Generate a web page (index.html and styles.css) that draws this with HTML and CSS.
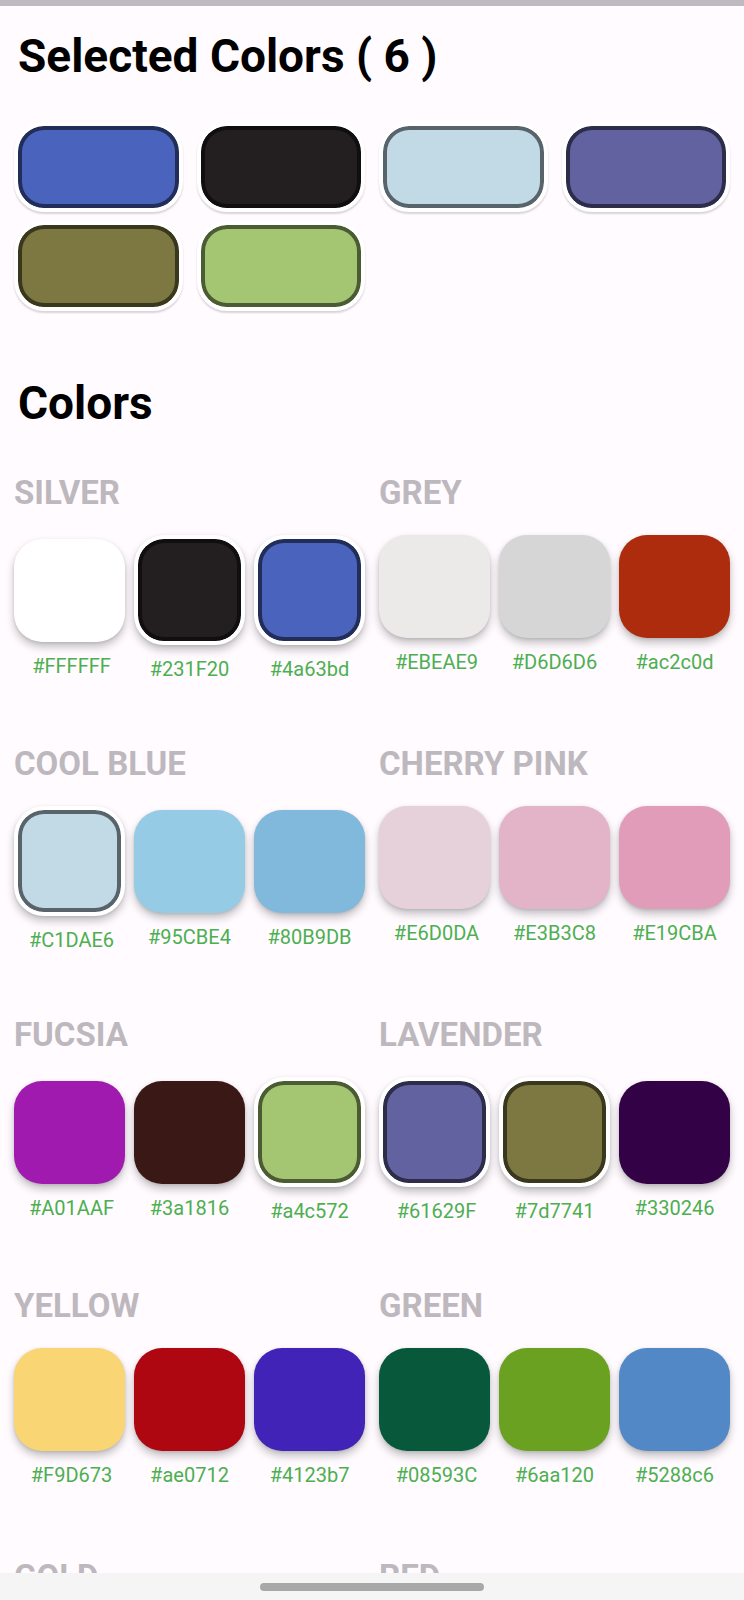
FILE: index.html
```
<!DOCTYPE html>
<html lang="en">
<head>
<meta charset="utf-8">
<meta name="viewport" content="width=device-width, initial-scale=1">
<title>Colors</title>
<link rel="stylesheet" href="styles.css">
</head>
<body>
<div class="app">
  <div class="status-bar"></div>
  <main class="content">
    <h1 class="title">Selected Colors ( 6 )</h1>
    <div class="selected-grid">
      <button class="chip" type="button" aria-label="#4a63bd" style="--c:#4a63bd"></button>
      <button class="chip" type="button" aria-label="#231F20" style="--c:#231F20"></button>
      <button class="chip" type="button" aria-label="#C1DAE6" style="--c:#C1DAE6"></button>
      <button class="chip" type="button" aria-label="#61629F" style="--c:#61629F"></button>
      <button class="chip" type="button" aria-label="#7d7741" style="--c:#7d7741"></button>
      <button class="chip" type="button" aria-label="#a4c572" style="--c:#a4c572"></button>
    </div>
    <h2 class="title title-colors">Colors</h2>
    <div class="groups">
      <section class="group">
        <h3 class="group-name">SILVER</h3>
        <div class="swatches">
          <label class="item"><button class="swatch" type="button" style="--c:#FFFFFF"></button><span class="code">#FFFFFF</span></label>
          <label class="item"><button class="swatch picked" type="button" style="--c:#231F20"></button><span class="code">#231F20</span></label>
          <label class="item"><button class="swatch picked" type="button" style="--c:#4a63bd"></button><span class="code">#4a63bd</span></label>
        </div>
      </section>
      <section class="group">
        <h3 class="group-name">GREY</h3>
        <div class="swatches">
          <label class="item"><button class="swatch" type="button" style="--c:#EBEAE9"></button><span class="code">#EBEAE9</span></label>
          <label class="item"><button class="swatch" type="button" style="--c:#D6D6D6"></button><span class="code">#D6D6D6</span></label>
          <label class="item"><button class="swatch" type="button" style="--c:#ac2c0d"></button><span class="code">#ac2c0d</span></label>
        </div>
      </section>
      <section class="group">
        <h3 class="group-name">COOL BLUE</h3>
        <div class="swatches">
          <label class="item"><button class="swatch picked" type="button" style="--c:#C1DAE6"></button><span class="code">#C1DAE6</span></label>
          <label class="item"><button class="swatch" type="button" style="--c:#95CBE4"></button><span class="code">#95CBE4</span></label>
          <label class="item"><button class="swatch" type="button" style="--c:#80B9DB"></button><span class="code">#80B9DB</span></label>
        </div>
      </section>
      <section class="group">
        <h3 class="group-name">CHERRY PINK</h3>
        <div class="swatches">
          <label class="item"><button class="swatch" type="button" style="--c:#E6D0DA"></button><span class="code">#E6D0DA</span></label>
          <label class="item"><button class="swatch" type="button" style="--c:#E3B3C8"></button><span class="code">#E3B3C8</span></label>
          <label class="item"><button class="swatch" type="button" style="--c:#E19CBA"></button><span class="code">#E19CBA</span></label>
        </div>
      </section>
      <section class="group">
        <h3 class="group-name">FUCSIA</h3>
        <div class="swatches">
          <label class="item"><button class="swatch" type="button" style="--c:#A01AAF"></button><span class="code">#A01AAF</span></label>
          <label class="item"><button class="swatch" type="button" style="--c:#3a1816"></button><span class="code">#3a1816</span></label>
          <label class="item"><button class="swatch picked" type="button" style="--c:#a4c572"></button><span class="code">#a4c572</span></label>
        </div>
      </section>
      <section class="group">
        <h3 class="group-name">LAVENDER</h3>
        <div class="swatches">
          <label class="item"><button class="swatch picked" type="button" style="--c:#61629F"></button><span class="code">#61629F</span></label>
          <label class="item"><button class="swatch picked" type="button" style="--c:#7d7741"></button><span class="code">#7d7741</span></label>
          <label class="item"><button class="swatch" type="button" style="--c:#330246"></button><span class="code">#330246</span></label>
        </div>
      </section>
      <section class="group">
        <h3 class="group-name">YELLOW</h3>
        <div class="swatches">
          <label class="item"><button class="swatch" type="button" style="--c:#F9D673"></button><span class="code">#F9D673</span></label>
          <label class="item"><button class="swatch" type="button" style="--c:#ae0712"></button><span class="code">#ae0712</span></label>
          <label class="item"><button class="swatch" type="button" style="--c:#4123b7"></button><span class="code">#4123b7</span></label>
        </div>
      </section>
      <section class="group">
        <h3 class="group-name">GREEN</h3>
        <div class="swatches">
          <label class="item"><button class="swatch" type="button" style="--c:#08593C"></button><span class="code">#08593C</span></label>
          <label class="item"><button class="swatch" type="button" style="--c:#6aa120"></button><span class="code">#6aa120</span></label>
          <label class="item"><button class="swatch" type="button" style="--c:#5288c6"></button><span class="code">#5288c6</span></label>
        </div>
      </section>
      <section class="group">
        <h3 class="group-name">GOLD</h3>
      </section>
      <section class="group">
        <h3 class="group-name">RED</h3>
      </section>
    </div>
  </main>
  <div class="nav-bar"><div class="nav-handle"></div></div>
</div>
</body>
</html>
```
FILE: styles.css
```
* {
  box-sizing: border-box;
}

body {
  margin: 0;
  background: #fffbff;
  font-family: Roboto, "Noto Sans", sans-serif;
}

.app {
  display: flex;
  flex-direction: column;
  height: 100vh;
}

.status-bar {
  flex: none;
  height: 6px;
  background: #bfbabf;
}

.content {
  flex: 1;
  min-height: 0;
  overflow: hidden;
  padding: 24px 14px 0;
}

.title {
  margin: 0;
  padding-left: 4px;
  font-size: 46px;
  line-height: 52px;
  font-weight: 700;
  color: #000;
}

.selected-grid {
  display: grid;
  grid-template-columns: repeat(4, 1fr);
  gap: 9px 14px;
  margin-top: 40px;
}

.chip,
.swatch {
  display: block;
  width: 100%;
  padding: 0;
  border: 0;
  border-radius: 28px;
  background: var(--c);
}

.chip,
.swatch.picked {
  border: 4px solid #fff;
  border-radius: 30px;
  box-shadow: inset 0 0 0 4px color-mix(in srgb, var(--c) 46%, #000), 0 2px 2px rgba(0, 0, 0, 0.16);
  background-clip: padding-box;
  background-color: var(--c);
}

.chip {
  height: 90px;
}

.title-colors {
  margin-top: 66px;
}

.groups {
  display: grid;
  grid-template-columns: repeat(2, 1fr);
  grid-auto-rows: 271px;
  column-gap: 14px;
  margin-top: 44px;
}

.group-name {
  margin: 0;
  font-size: 33px;
  line-height: 40px;
  font-weight: 700;
  color: #bdb8bd;
}

.swatches {
  display: grid;
  grid-template-columns: repeat(3, 1fr);
  align-items: center;
  column-gap: 9px;
  margin-top: 22px;
}

.item {
  display: block;
}

.swatch {
  height: 103px;
  box-shadow: 0 5px 8px rgba(0, 0, 0, 0.24), 0 1px 3px rgba(0, 0, 0, 0.1);
}

.swatch.picked {
  height: 110px;
  box-shadow: inset 0 0 0 4px color-mix(in srgb, var(--c) 46%, #000), 0 5px 8px rgba(0, 0, 0, 0.24), 0 1px 3px rgba(0, 0, 0, 0.1);
}

.code {
  display: block;
  margin-top: 12px;
  font-size: 20px;
  line-height: 24px;
  text-align: center;
  color: #4caf50;
}

.item:first-child .code {
  padding-left: 4px;
}

.nav-bar {
  flex: none;
  display: flex;
  justify-content: center;
  align-items: center;
  height: 27px;
  background: #f5f5f5;
}

.nav-handle {
  width: 30%;
  height: 8px;
  border-radius: 4px;
  background: #a8a8a8;
}
```
